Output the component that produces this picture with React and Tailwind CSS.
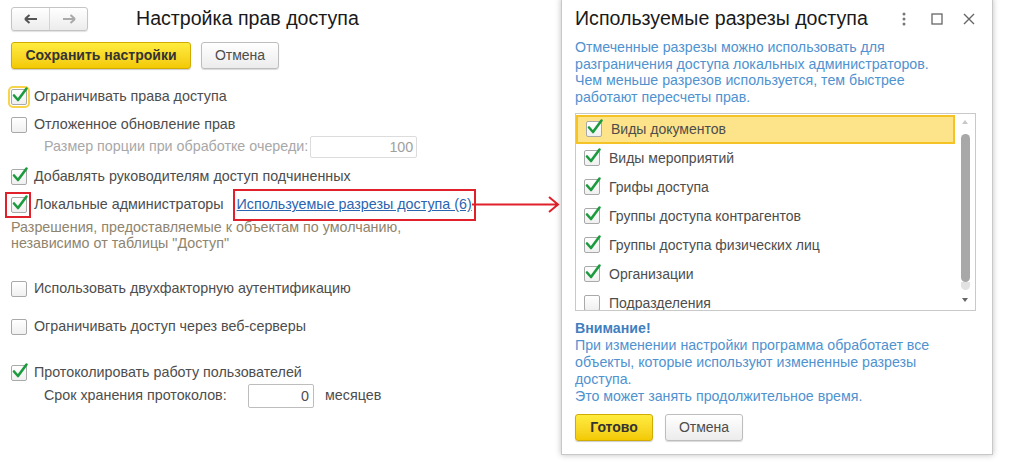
import { useState } from "react";

function Check({ checked, focus }) {
  return (
    <span
      className={`relative inline-block w-4 h-4 shrink-0 rounded-[2px] border bg-gradient-to-b from-white to-[#f0f0f0] ${
        focus ? "border-[#a9a9a9] outline-2 outline-offset-1 outline-[#f7d44a]" : "border-[#a9a9a9]"
      }`}
    >
      {checked && (
        <svg className="absolute -left-[1px] -top-[4px] w-[18px] h-[18px]" viewBox="0 0 18 18" fill="none">
          <path d="M3 9.5 L7 14 L15.5 2.5" stroke="#1c9b3e" strokeWidth="2.6" strokeLinecap="round" strokeLinejoin="round" />
        </svg>
      )}
    </span>
  );
}

function Row({ checked, focus, children, className = "" }) {
  return (
    <div className={`flex items-center h-[22px] ${className}`}>
      <Check checked={checked} focus={focus} />
      <span className="ml-[7px]">{children}</span>
    </div>
  );
}

function YellowBtn({ children, className = "" }) {
  return (
    <button className={`h-[27px] rounded-[3px] border border-[#d2ab00] bg-gradient-to-b from-[#ffec3d] to-[#f3c900] font-bold text-[#333] shadow-[0_1px_1px_rgba(0,0,0,0.2)] ${className}`}>
      {children}
    </button>
  );
}

function GrayBtn({ children, className = "" }) {
  return (
    <button className={`h-[27px] rounded-[3px] border border-[#bdbdbd] bg-gradient-to-b from-white to-[#ececec] text-[#4d4d4d] shadow-[0_1px_1px_rgba(0,0,0,0.15)] ${className}`}>
      {children}
    </button>
  );
}

const razrezy = [
  { name: "Виды документов", checked: true },
  { name: "Виды мероприятий", checked: true },
  { name: "Грифы доступа", checked: true },
  { name: "Группы доступа контрагентов", checked: true },
  { name: "Группы доступа физических лиц", checked: true },
  { name: "Организации", checked: true },
  { name: "Подразделения", checked: false },
];

export default function App() {
  const [items] = useState(razrezy);

  return (
    <div className="relative w-[1024px] h-[464px] overflow-hidden bg-white text-[14.3px] text-[#4d4d4d]" style={{ fontFamily: '"Liberation Sans", Arial, sans-serif' }}>
      {/* Основная форма */}
      <div className="flex flex-col pl-[11px] pt-[7px]">
        <div className="flex items-center h-[24px]">
          <div className="flex h-[24px] w-[77px] rounded-[3px] border border-[#c4c4c4] bg-gradient-to-b from-white to-[#ececec] shadow-[0_1px_1px_rgba(0,0,0,0.12)]">
            <div className="flex w-[38px] items-center justify-center border-r border-[#d4d4d4]">
              <svg width="14" height="10" viewBox="0 0 14 10"><path d="M1 5 H13 M1 5 L5.5 1 M1 5 L5.5 9" stroke="#555" strokeWidth="2" fill="none" /></svg>
            </div>
            <div className="flex flex-1 items-center justify-center">
              <svg width="14" height="10" viewBox="0 0 14 10"><path d="M1 5 H13 M13 5 L8.5 1 M13 5 L8.5 9" stroke="#aaa" strokeWidth="2" fill="none" /></svg>
            </div>
          </div>
          <h1 className="ml-[48px] text-[19.6px] text-[#1a1a1a]">Настройка прав доступа</h1>
        </div>

        <div className="flex mt-[11px] gap-[10px]">
          <YellowBtn className="w-[180px] text-[14px]">Сохранить настройки</YellowBtn>
          <GrayBtn className="w-[78px] text-[14px]">Отмена</GrayBtn>
        </div>

        <Row checked focus className="mt-[17px]">Ограничивать права доступа</Row>
        <Row className="mt-[6px]">Отложенное обновление прав</Row>
        <div className="flex items-center h-[22px] pl-[33px]">
          <span className="text-[#a8a8a8]">Размер порции при обработке очереди:</span>
          <div className="ml-[2px] h-[22px] w-[107px] rounded-[2px] border border-[#dcdcdc] text-right pr-[3px] leading-[20px] text-[#a0a0a0]">100</div>
        </div>
        <Row checked className="mt-[8px]">Добавлять руководителям доступ подчиненных</Row>

        <div className="flex items-center h-[24px] mt-[5px]">
          <span className="relative flex">
            <Check checked />
            <span className="absolute -left-[6px] -top-[5px] w-[26px] h-[26px] border-2 border-[#e0202a]" />
          </span>
          <span className="ml-[7px]">Локальные администраторы</span>
          <span className="relative ml-[13px]">
            <a href="#" className="text-[#2b64b0] underline">Используемые разрезы доступа (6)</a>
            <span className="absolute -left-[4px] -right-[4px] -top-[5px] -bottom-[5px] border-2 border-[#e0202a]" />
          </span>
        </div>
        <p className="mt-[2px] leading-[16px] text-[#8f846d]">
          Разрешения, предоставляемые к объектам по умолчанию,<br />
          независимо от таблицы "Доступ"
        </p>

        <Row className="mt-[27px]">Использовать двухфакторную аутентификацию</Row>
        <Row className="mt-[16px]">Ограничивать доступ через веб-серверы</Row>
        <Row checked className="mt-[24px]">Протоколировать работу пользователей</Row>
        <div className="flex items-center h-[24px]">
          <span className="w-[237px] pl-[33px]">Срок хранения протоколов:</span>
          <div className="h-[24px] w-[66px] rounded-[2px] border border-[#bdbdbd] text-right pr-[4px] leading-[22px]">0</div>
          <span className="ml-[11px]">месяцев</span>
        </div>
      </div>

      {/* Стрелка */}
      <svg className="absolute left-[472px] top-[196px]" width="90" height="18" viewBox="0 0 90 18" fill="none">
        <path d="M0 8.5 H86 M77 1 L86 8.5 L77 16" stroke="#e0202a" strokeWidth="2" />
      </svg>

      {/* Окно выбора разрезов */}
      <div className="absolute left-[561px] -top-[2px] w-[432px] h-[457px] border border-[#c8c8c8] bg-white shadow-[0_0_6px_rgba(0,0,0,0.25)] flex flex-col px-[13px] text-[14.2px]">
        <div className="flex items-center h-[36px] mt-[2px]">
          <span className="text-[19.6px] text-[#1a1a1a]">Используемые разрезы доступа</span>
          <div className="ml-auto flex items-center mr-[4px]">
            <svg width="4" height="14" viewBox="0 0 4 14"><circle cx="2" cy="2" r="1.5" fill="#777" /><circle cx="2" cy="7" r="1.5" fill="#777" /><circle cx="2" cy="12" r="1.5" fill="#777" /></svg>
            <svg className="ml-[25px]" width="12" height="12" viewBox="0 0 12 12"><rect x="1" y="1" width="10" height="10" stroke="#666" strokeWidth="1.3" fill="none" /></svg>
            <svg className="ml-[20px]" width="12" height="12" viewBox="0 0 12 12"><path d="M1 1 L11 11 M11 1 L1 11" stroke="#666" strokeWidth="1.4" /></svg>
          </div>
        </div>
        <p className="mt-[2px] leading-[16.7px] text-[#4f92cf]">
          Отмеченные разрезы можно использовать для<br />
          разграничения доступа локальных администраторов.<br />
          Чем меньше разрезов используется, тем быстрее<br />
          работают пересчеты прав.
        </p>

        <div className="mt-[7px] h-[198px] w-[401px] border border-[#c9c9c9] flex overflow-hidden">
          <div className="flex-1 flex flex-col">
            {items.map((it, i) => (
              <div
                key={it.name}
                className={`flex items-center shrink-0 h-[29px] pl-[8px] text-[14px] ${
                  i === 0 ? "bg-[#fde48a] border-2 border-[#f6c327] pl-[6px] h-[28px] mt-[1px]" : ""
                }`}
              >
                <Check checked={it.checked} />
                <span className="ml-[9px]">{it.name}</span>
              </div>
            ))}
          </div>
          <div className="w-[20px] flex flex-col items-center pt-[6px] pb-[6px]">
            <svg width="6" height="4" viewBox="0 0 6 4"><path d="M0 4 L3 0 L6 4 Z" fill="#c8c8c8" /></svg>
            <div className="mt-[10px] w-[9px] h-[148px] rounded-[5px] bg-[#a8a8a8]" />
            <div className="w-[9px] h-[8px] rounded-b-[5px] bg-[#e2e2e2]" />
            <svg className="mt-[8px]" width="6" height="4" viewBox="0 0 6 4"><path d="M0 0 L3 4 L6 0 Z" fill="#666" /></svg>
          </div>
        </div>

        <p className="mt-[9px] leading-[17px] text-[#4f92cf]">
          <b className="text-[#3f7fbf]">Внимание!</b><br />
          При изменении настройки программа обработает все<br />
          объекты, которые используют измененные разрезы<br />
          доступа.<br />
          Это может занять продолжительное время.
        </p>

        <div className="flex gap-[12px] mt-[9px]">
          <YellowBtn className="w-[78px] text-[14px]">Готово</YellowBtn>
          <GrayBtn className="w-[78px] text-[14px]">Отмена</GrayBtn>
        </div>
      </div>
    </div>
  );
}
